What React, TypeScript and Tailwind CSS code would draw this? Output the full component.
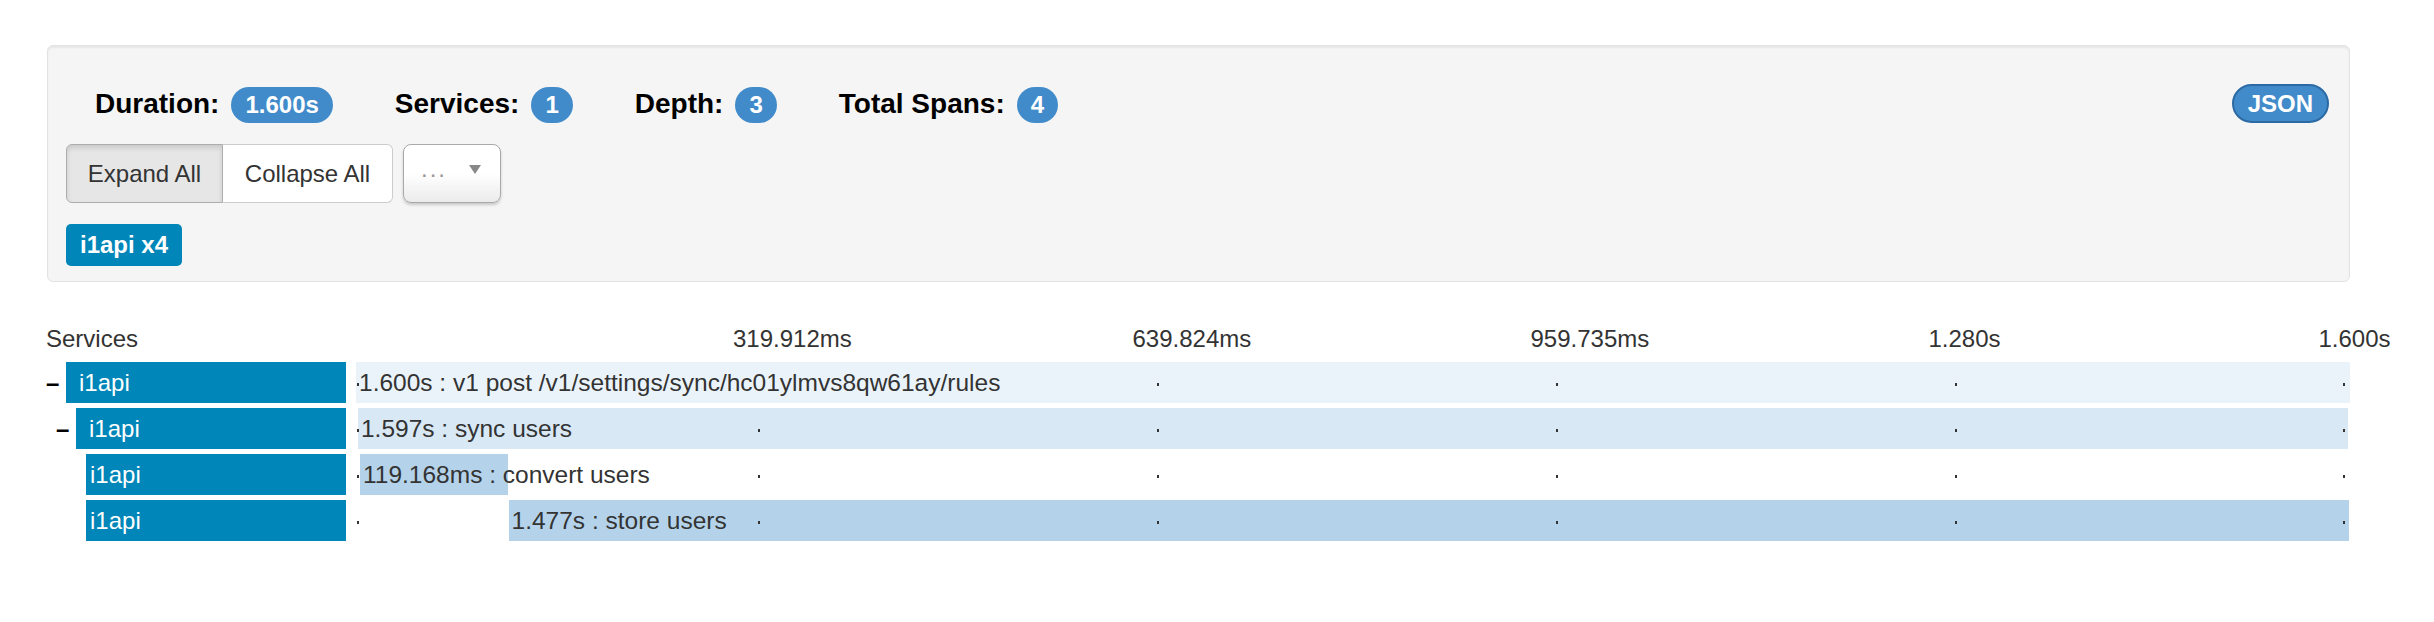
import React from "react";

const TOTAL = 1600;
const W = 1994;

type Span = {
  depth: number;
  expandable: boolean;
  start: number;
  dur: number;
  label: string;
  color: string;
  hideTicks?: number[];
};

const spans: Span[] = [
  { depth: 0, expandable: true, start: 0, dur: 1600, label: "1.600s : v1 post /v1/settings/sync/hc01ylmvs8qw61ay/rules", color: "#ebf3fa", hideTicks: [1] },
  { depth: 1, expandable: true, start: 1.6, dur: 1597, label: "1.597s : sync users", color: "#d9e8f5" },
  { depth: 2, expandable: false, start: 3.2, dur: 119.168, label: "119.168ms : convert users", color: "#b4d3ea" },
  { depth: 2, expandable: false, start: 122.4, dur: 1477, label: "1.477s : store users", color: "#b4d3ea" },
];

const ticks = [1, 402, 801, 1200, 1599, 1987];
const tickLabels = [
  { t: "319.912ms", x: 377 },
  { t: "639.824ms", x: 776.5 },
  { t: "959.735ms", x: 1174.5 },
  { t: "1.280s", x: 1572.5 },
  { t: "1.600s", x: 1962.5 },
];

function Stat({ label, value }: { label: string; value: string }) {
  return (
    <div className="flex items-baseline mr-[62px]">
      <span className="text-[28px] leading-[36px] font-bold text-black">{label}</span>
      <span className="ml-[12px] inline-flex h-[36px] items-center rounded-full bg-[#428bca] px-[14px] text-[24px] leading-[36px] font-bold text-white">
        {value}
      </span>
    </div>
  );
}

export default function App() {
  return (
    <div
      className="min-h-screen bg-white pl-[46px] pt-[45px] text-[#333]"
      style={{ fontFamily: '"Liberation Sans", Arial, sans-serif' }}
    >
      {/* Summary well */}
      <div className="ml-[1px] w-[2303px] h-[237px] rounded-[6px] border border-[#e3e3e3] bg-[#f5f5f5] pt-[38px] pl-[18px] pr-[20px] pb-[15px] shadow-[inset_0_2px_2px_rgba(0,0,0,0.06)]">
        <div className="flex items-start justify-between h-[39px]">
          <div className="flex items-baseline mt-[2px] ml-[29px]">
            <Stat label="Duration:" value="1.600s" />
            <Stat label="Services:" value="1" />
            <Stat label="Depth:" value="3" />
            <Stat label="Total Spans:" value="4" />
          </div>
          <button className="h-[39px] rounded-full border-2 border-[#2c6aa3] bg-[#428bca] px-[14px] text-[24px] font-bold leading-none text-white">
            JSON
          </button>
        </div>

        <div className="mt-[21px] flex items-start">
          <div className="flex">
            <button className="flex h-[59px] w-[157px] items-center justify-center rounded-l-[6px] border border-[#adadad] bg-[#e6e6e6] text-[24px] text-[#333] shadow-[inset_0_3px_5px_rgba(0,0,0,0.125)]">
              Expand All
            </button>
            <button className="flex h-[59px] w-[170px] items-center justify-center rounded-r-[6px] border border-l-0 border-[#cccccc] bg-white text-[24px] text-[#333]">
              Collapse All
            </button>
          </div>
          <div className="ml-[10px] flex h-[59px] w-[98px] items-start rounded-[8px] border border-[#a9a9a9] bg-gradient-to-b from-white via-white to-[#ebebeb] shadow-[0_2px_3px_rgba(0,0,0,0.18)]">
            <span className="ml-[17px] mt-[12px] text-[24px] leading-[24px] tracking-[2px] text-[#999]">...</span>
            <svg className="ml-[22px] mt-[20px]" width="12" height="9" viewBox="0 0 12 9">
              <polygon points="0,0 12,0 6,9" fill="#888" />
            </svg>
          </div>
        </div>

        <div className="mt-[21px] flex">
          <span className="flex h-[42px] items-center rounded-[5px] bg-[#0086b8] px-[14px] text-[24px] font-bold text-white">
            i1api x4
          </span>
        </div>
      </div>

      {/* Timeline header */}
      <div className="mt-[40px] flex h-[34px] text-[24px] leading-[34px] text-[#333]">
        <div className="w-[300px]">Services</div>
        <div className="relative ml-[10px] w-[1994px]">
          {tickLabels.map((l) => (
            <span key={l.t} className="absolute top-0 whitespace-nowrap" style={{ left: l.x }}>
              {l.t}
            </span>
          ))}
        </div>
      </div>

      {/* Rows */}
      <div className="mt-[6px] flex flex-col gap-[5px]">
        {spans.map((s, i) => {
          const left = (s.start / TOTAL) * W;
          const width = (s.dur / TOTAL) * W;
          return (
            <div key={i} className="flex h-[41px]">
              <div className="flex w-[300px] items-center" style={{ paddingLeft: s.depth * 10 }}>
                <span className="w-[20px] text-[24px] font-bold leading-none text-black">
                  {s.expandable ? "–" : ""}
                </span>
                <div
                  className="flex h-[41px] flex-1 items-center bg-[#0086b8] text-[24px] leading-[41px] text-white"
                  style={{ paddingLeft: s.expandable ? 13 : 4 }}
                >
                  i1api
                </div>
              </div>
              <div className="relative ml-[10px] h-[41px] w-[1994px]">
                <div className="absolute top-0 h-[41px]" style={{ left, width, backgroundColor: s.color }} />
                {ticks.map((t, ti) =>
                  s.hideTicks && s.hideTicks.includes(ti) ? null : (
                    <div key={ti} className="absolute top-[21px] h-[3px] w-[2px] bg-[#333]" style={{ left: t }} />
                  )
                )}
                <span
                  className="absolute top-0 whitespace-nowrap text-[24.5px] leading-[41px] text-[#333]"
                  style={{ left: left + 3 }}
                >
                  {s.label}
                </span>
              </div>
            </div>
          );
        })}
      </div>
    </div>
  );
}
